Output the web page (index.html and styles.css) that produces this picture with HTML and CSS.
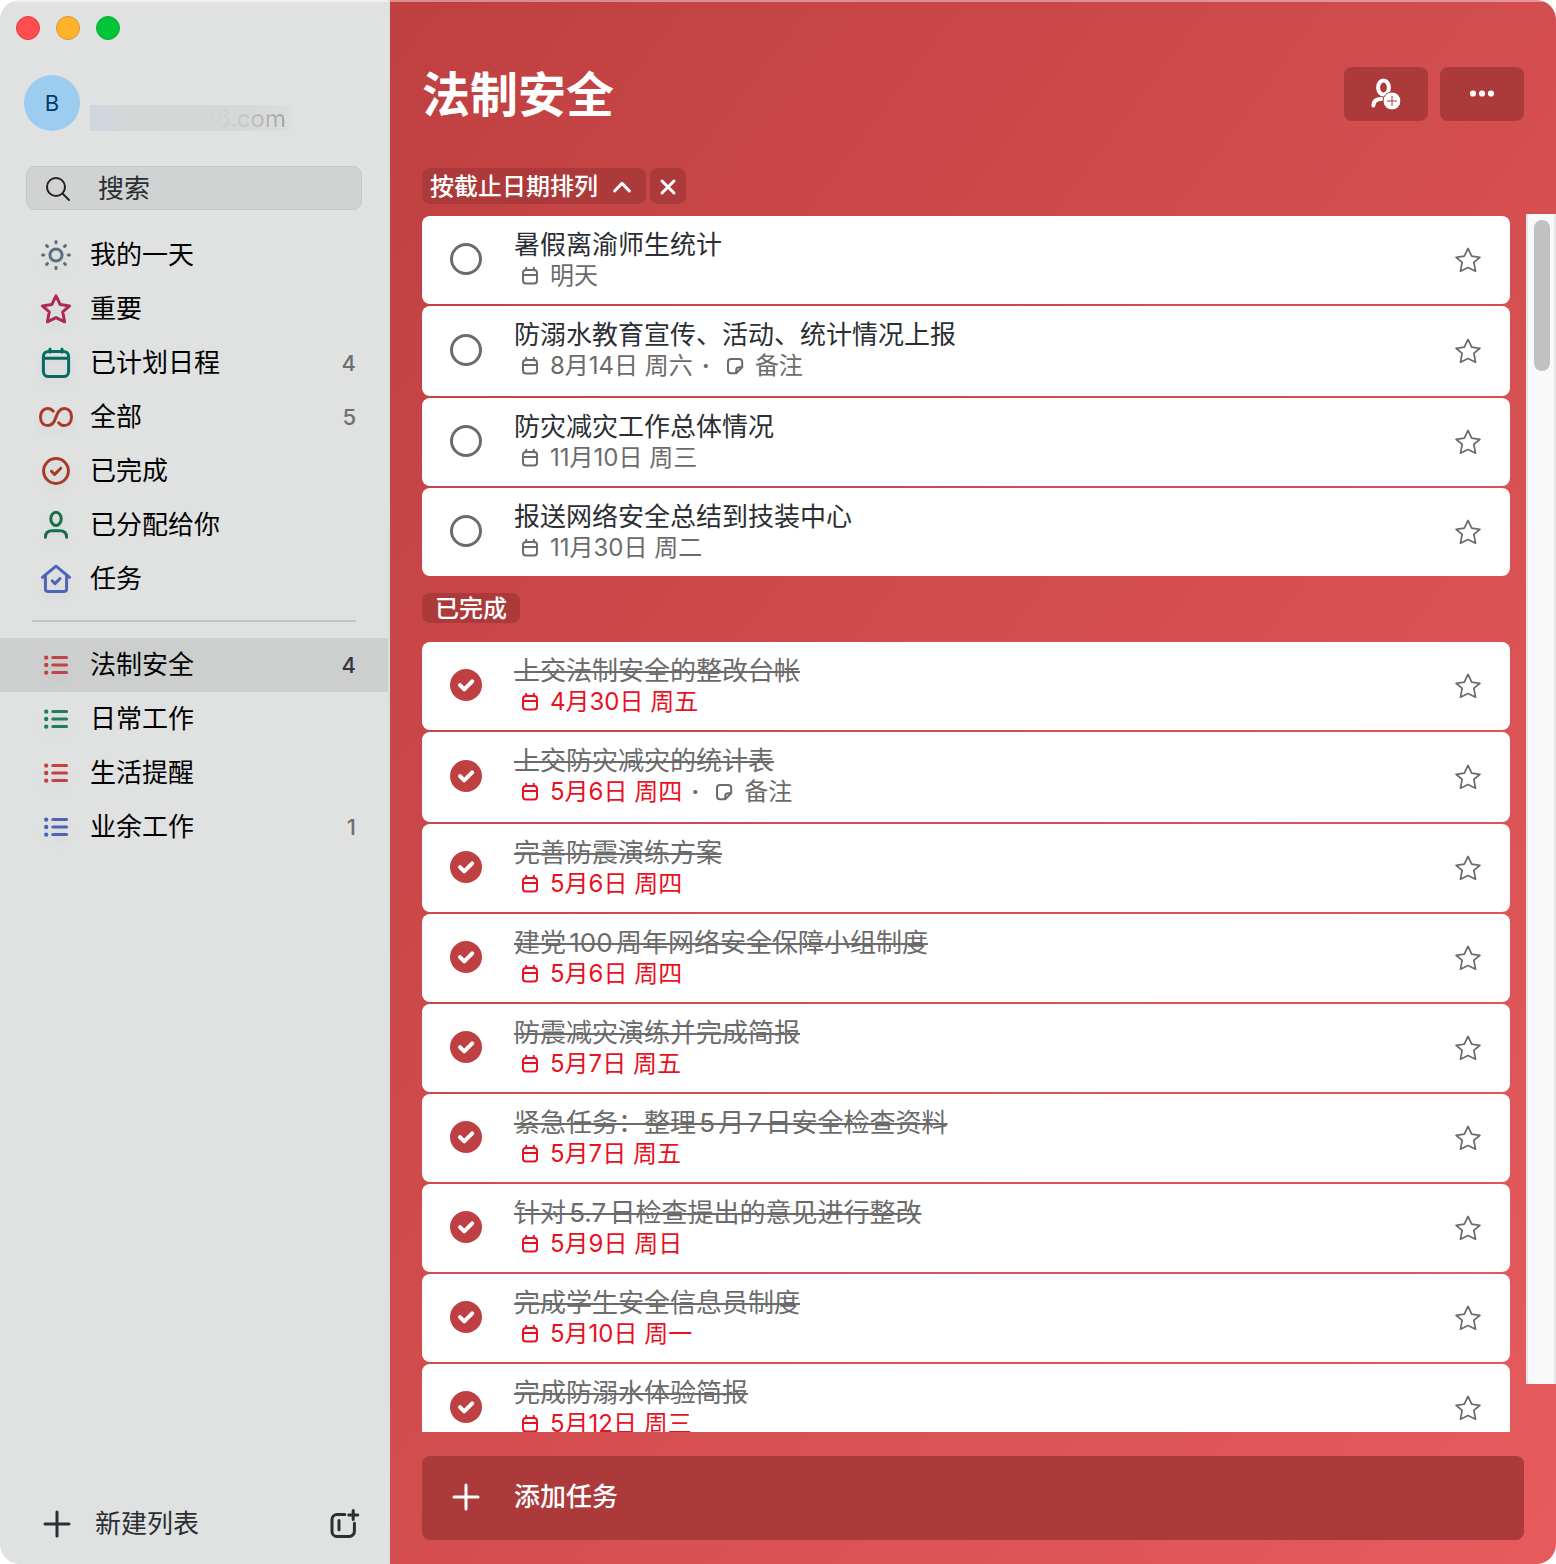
FILE: index.html
```html
<!DOCTYPE html>
<html lang="zh-CN">
<head>
<meta charset="utf-8">
<meta name="viewport" content="width=device-width, initial-scale=1">
<title>法制安全</title>
<link rel="stylesheet" href="styles.css">
</head>
<body>
<svg class="sprite" aria-hidden="true">
  <symbol id="i-search" viewBox="0 0 26 26"><circle cx="11" cy="11" r="9"/><path d="M17.6 17.6 24 24"/></symbol>
  <symbol id="i-sun" viewBox="0 0 32 32"><circle cx="16" cy="16" r="6.1"/><path d="M16 2.6v1.2M16 28.2v1.2M2.6 16h1.2M28.2 16h1.2M6.6 6.6l.9.9M24.5 24.5l.9.9M6.6 25.4l.9-.9M24.5 7.500l.9-.9"/></symbol>
  <symbol id="i-star" viewBox="0 0 32 32"><path d="M16 2.800 20.200 11.600 29.600 12.900 22.700 18.800 24.600 28.800 16 24.600 7.400 28.800 9.300 18.800 2.400 12.900 11.800 11.600Z"/></symbol>
  <symbol id="i-cal" viewBox="0 0 32 32"><rect x="3.400" y="4.400" width="25.200" height="25.200" rx="5"/><path d="M3.400 11.200h25.200M10 2v3M22 2v3"/></symbol>
  <symbol id="i-inf" viewBox="0 0 36 32"><path d="M15.200 10.200C13.800 8.400 12 7.400 9.700 7.400 5.400 7.400 2.500 11 2.500 16s2.900 8.600 7.200 8.600c4.500 0 6.800-3.600 8.300-8.600s3.800-8.600 8.300-8.600c4.300 0 7.200 3.600 7.200 8.600s-2.900 8.600-7.200 8.600c-2.300 0-4.100-1-5.500-2.800"/></symbol>
  <symbol id="i-done" viewBox="0 0 32 32"><circle cx="16" cy="16" r="12.400"/><path d="M11.400 16.200l3.200 3.200 6.200-6.200"/></symbol>
  <symbol id="i-user" viewBox="0 0 32 32"><ellipse cx="16" cy="9.800" rx="5.200" ry="6.600"/><path d="M5.400 28.200c0-4.400 2.600-6.400 7-6.400h7.200c4.400 0 7 2 7 6.400"/></symbol>
  <symbol id="i-home" viewBox="0 0 32 32"><path d="M2.400 14.400 16 3.200l13.600 11.200M5.400 12.400v13.400c0 1.800 1 2.800 2.800 2.800h15.600c1.800 0 2.800-1 2.800-2.800V12.400M12.200 17.800l2.800 2.800 5-5"/></symbol>
  <symbol id="i-list" viewBox="0 0 32 32"><path d="M12.800 8.600h13.800M12.800 16h13.800M12.800 23.600h13.800"/><path stroke-width="4.400" d="M6.200 8.600h.01M6.200 16h.01M6.200 23.600h.01"/></symbol>
  <symbol id="i-plus" viewBox="0 0 28 28"><path d="M14 2v24M2 14h24"/></symbol>
  <symbol id="i-group" viewBox="0 0 32 32"><path d="M16.800 6.600H9a5 5 0 0 0-5 5v11.800a5 5 0 0 0 5 5h12.400a5 5 0 0 0 5-5V15.200M11 12.400v9.400M25.200 2.600v9M20.800 7.100h9"/></symbol>
  <symbol id="i-date" viewBox="0 0 20 20"><rect x="3" y="4" width="14" height="13.500" rx="3"/><path d="M3 9h14M6.200 1.800v2.400M13.800 1.800v2.400"/></symbol>
  <symbol id="i-note" viewBox="0 0 20 20"><path d="M11.200 17.300H6a3 3 0 0 1-3-3V6a3 3 0 0 1 3-3h8.200a3 3 0 0 1 3 3v5.200l-6 6.100v-3.100a3 3 0 0 1 3-3h3"/></symbol>
  <symbol id="i-tick" viewBox="0 0 32 32"><path d="M10 16.200l4.200 4.200 8-8"/></symbol>
  <symbol id="i-up" viewBox="0 0 20 20"><path d="M2.600 14 10 6.400 17.400 14"/></symbol>
  <symbol id="i-close" viewBox="0 0 20 20"><path d="M4 4l12 12M16 4 4 16"/></symbol>
  <symbol id="i-share" viewBox="0 0 32 32"><ellipse cx="13.500" cy="9.500" rx="5.400" ry="7"/><path d="M3.400 27.600C3.400 23.400 6.200 21 11.400 21"/><circle class="badge" cx="22" cy="23" r="9"/><path class="cross" d="M22 18.400v9.200M17.400 23h9.200"/></symbol>
  <symbol id="i-more" viewBox="0 0 28 28"><circle cx="5" cy="13.500" r="3.100"/><circle cx="14" cy="13.500" r="3.100"/><circle cx="23" cy="13.500" r="3.100"/></symbol>
</svg>

<div class="window">
  <aside class="sidebar">
    <div class="lights">
      <button class="light light-close" aria-label="关闭"></button>
      <button class="light light-min" aria-label="最小化"></button>
      <button class="light light-max" aria-label="缩放"></button>
    </div>
    <div class="account">
      <span class="avatar">B</span>
      <span class="email"><span class="email-text">d6.com</span></span>
    </div>
    <label class="search">
      <svg class="icon-search"><use href="#i-search"/></svg>
      <input type="search" placeholder="搜索" aria-label="搜索">
    </label>
    <nav class="nav">
      <a class="item slate" href="#"><svg><use href="#i-sun"/></svg><span>我的一天</span></a>
      <a class="item pink" href="#"><svg><use href="#i-star"/></svg><span>重要</span></a>
      <a class="item teal" href="#"><svg><use href="#i-cal"/></svg><span>已计划日程</span><span class="count">4</span></a>
      <a class="item rust" href="#"><svg class="wide"><use href="#i-inf"/></svg><span>全部</span><span class="count">5</span></a>
      <a class="item rust" href="#"><svg><use href="#i-done"/></svg><span>已完成</span></a>
      <a class="item green" href="#"><svg><use href="#i-user"/></svg><span>已分配给你</span></a>
      <a class="item blue" href="#"><svg><use href="#i-home"/></svg><span>任务</span></a>
    </nav>
    <hr class="divider">
    <nav class="nav">
      <a class="item red selected" href="#" aria-current="page"><svg><use href="#i-list"/></svg><span>法制安全</span><span class="count">4</span></a>
      <a class="item leaf" href="#"><svg><use href="#i-list"/></svg><span>日常工作</span></a>
      <a class="item red" href="#"><svg><use href="#i-list"/></svg><span>生活提醒</span></a>
      <a class="item blue" href="#"><svg><use href="#i-list"/></svg><span>业余工作</span><span class="count">1</span></a>
    </nav>
    <div class="sidebar-foot">
      <button class="new-list"><svg><use href="#i-plus"/></svg><span>新建列表</span></button>
      <button class="new-group" aria-label="新建组"><svg><use href="#i-group"/></svg></button>
    </div>
  </aside>

  <main class="main">
    <header class="head">
      <h1>法制安全</h1>
      <div class="tools">
        <button class="tool" aria-label="共享"><svg class="icon-share"><use href="#i-share"/></svg></button>
        <button class="tool" aria-label="更多"><svg class="icon-more"><use href="#i-more"/></svg></button>
      </div>
    </header>
    <div class="sort">
      <button class="pill sort-by">按截止日期排列<svg><use href="#i-up"/></svg></button>
      <button class="pill sort-clear" aria-label="清除排序"><svg><use href="#i-close"/></svg></button>
    </div>
    <div class="content">
      <div class="scroller">
        <ul class="tasks">
          <li class="task"><label class="check"><input type="checkbox" aria-label="暑假离渝师生统计"></label><div class="body"><p class="title">暑假离渝师生统计</p><p class="meta"><span class="due"><svg><use href="#i-date"/></svg>明天</span></p></div><button class="fav" aria-label="标记为重要"><svg><use href="#i-star"/></svg></button></li>
          <li class="task"><label class="check"><input type="checkbox" aria-label="防溺水教育宣传、活动、统计情况上报"></label><div class="body"><p class="title">防溺水教育宣传、活动、统计情况上报</p><p class="meta has-note"><span class="due"><svg><use href="#i-date"/></svg>8月14日 周六</span><span class="dot">·</span><span class="note"><svg><use href="#i-note"/></svg>备注</span></p></div><button class="fav" aria-label="标记为重要"><svg><use href="#i-star"/></svg></button></li>
          <li class="task"><label class="check"><input type="checkbox" aria-label="防灾减灾工作总体情况"></label><div class="body"><p class="title">防灾减灾工作总体情况</p><p class="meta"><span class="due"><svg><use href="#i-date"/></svg>11月10日 周三</span></p></div><button class="fav" aria-label="标记为重要"><svg><use href="#i-star"/></svg></button></li>
          <li class="task"><label class="check"><input type="checkbox" aria-label="报送网络安全总结到技装中心"></label><div class="body"><p class="title">报送网络安全总结到技装中心</p><p class="meta"><span class="due"><svg><use href="#i-date"/></svg>11月30日 周二</span></p></div><button class="fav" aria-label="标记为重要"><svg><use href="#i-star"/></svg></button></li>
        </ul>
        <button class="pill done-toggle" aria-expanded="true">已完成</button>
        <ul class="tasks done">
          <li class="task"><label class="check"><input type="checkbox" checked aria-label="上交法制安全的整改台帐"><svg><use href="#i-tick"/></svg></label><div class="body"><p class="title">上交法制安全的整改台帐</p><p class="meta"><span class="due"><svg><use href="#i-date"/></svg>4月30日 周五</span></p></div><button class="fav" aria-label="标记为重要"><svg><use href="#i-star"/></svg></button></li>
          <li class="task"><label class="check"><input type="checkbox" checked aria-label="上交防灾减灾的统计表"><svg><use href="#i-tick"/></svg></label><div class="body"><p class="title">上交防灾减灾的统计表</p><p class="meta has-note"><span class="due"><svg><use href="#i-date"/></svg>5月6日 周四</span><span class="dot">·</span><span class="note"><svg><use href="#i-note"/></svg>备注</span></p></div><button class="fav" aria-label="标记为重要"><svg><use href="#i-star"/></svg></button></li>
          <li class="task"><label class="check"><input type="checkbox" checked aria-label="完善防震演练方案"><svg><use href="#i-tick"/></svg></label><div class="body"><p class="title">完善防震演练方案</p><p class="meta"><span class="due"><svg><use href="#i-date"/></svg>5月6日 周四</span></p></div><button class="fav" aria-label="标记为重要"><svg><use href="#i-star"/></svg></button></li>
          <li class="task"><label class="check"><input type="checkbox" checked aria-label="建党100周年网络安全保障小组制度"><svg><use href="#i-tick"/></svg></label><div class="body"><p class="title">建党100周年网络安全保障小组制度</p><p class="meta"><span class="due"><svg><use href="#i-date"/></svg>5月6日 周四</span></p></div><button class="fav" aria-label="标记为重要"><svg><use href="#i-star"/></svg></button></li>
          <li class="task"><label class="check"><input type="checkbox" checked aria-label="防震减灾演练并完成简报"><svg><use href="#i-tick"/></svg></label><div class="body"><p class="title">防震减灾演练并完成简报</p><p class="meta"><span class="due"><svg><use href="#i-date"/></svg>5月7日 周五</span></p></div><button class="fav" aria-label="标记为重要"><svg><use href="#i-star"/></svg></button></li>
          <li class="task"><label class="check"><input type="checkbox" checked aria-label="紧急任务：整理5月7日安全检查资料"><svg><use href="#i-tick"/></svg></label><div class="body"><p class="title">紧急任务：整理5月7日安全检查资料</p><p class="meta"><span class="due"><svg><use href="#i-date"/></svg>5月7日 周五</span></p></div><button class="fav" aria-label="标记为重要"><svg><use href="#i-star"/></svg></button></li>
          <li class="task"><label class="check"><input type="checkbox" checked aria-label="针对5.7日检查提出的意见进行整改"><svg><use href="#i-tick"/></svg></label><div class="body"><p class="title">针对5.7日检查提出的意见进行整改</p><p class="meta"><span class="due"><svg><use href="#i-date"/></svg>5月9日 周日</span></p></div><button class="fav" aria-label="标记为重要"><svg><use href="#i-star"/></svg></button></li>
          <li class="task"><label class="check"><input type="checkbox" checked aria-label="完成学生安全信息员制度"><svg><use href="#i-tick"/></svg></label><div class="body"><p class="title">完成学生安全信息员制度</p><p class="meta"><span class="due"><svg><use href="#i-date"/></svg>5月10日 周一</span></p></div><button class="fav" aria-label="标记为重要"><svg><use href="#i-star"/></svg></button></li>
          <li class="task"><label class="check"><input type="checkbox" checked aria-label="完成防溺水体验简报"><svg><use href="#i-tick"/></svg></label><div class="body"><p class="title">完成防溺水体验简报</p><p class="meta"><span class="due"><svg><use href="#i-date"/></svg>5月12日 周三</span></p></div><button class="fav" aria-label="标记为重要"><svg><use href="#i-star"/></svg></button></li>
        </ul>
      </div>
      <div class="track"><div class="thumb"></div></div>
    </div>
    <button class="add-task"><svg><use href="#i-plus"/></svg><span>添加任务</span></button>
  </main>
</div>
</body>
</html>
```
FILE: styles.css
```css
* { box-sizing: border-box; }

body {
  margin: 0;
  background: #fff;
  font-family: Inter, "Noto Sans CJK SC", sans-serif;
  font-size: 26px;
  line-height: 32px;
  color: #2b2e33;
}

button {
  margin: 0;
  padding: 0;
  border: 0;
  background: none;
  color: inherit;
  font: inherit;
}

a { color: inherit; text-decoration: none; }
p, h1, ul { margin: 0; padding: 0; }

svg {
  display: block;
  flex: none;
  fill: none;
  stroke: currentColor;
  stroke-width: 3;
  stroke-linecap: round;
  stroke-linejoin: round;
}

.sprite { display: none; }

.window {
  display: flex;
  height: 100vh;
  overflow: hidden;
  border-radius: 20px;
  background: #e0e2e1;
}

/* Sidebar */
.sidebar {
  display: flex;
  flex-direction: column;
  flex: none;
  width: 390px;
  border-right: 2px solid #dddfde;
  box-shadow: inset 0 2px rgba(255, 255, 255, .5);
}

.lights { display: flex; gap: 16px; padding: 16px 16px 0; }
.light { width: 24px; height: 24px; border-radius: 50%; border: 1px solid; }
.light-close { background: #ff4d50; border-color: #e23b40; }
.light-min { background: #ffb32c; border-color: #dd9526; }
.light-max { background: #00c537; border-color: #0aac30; }

.account { display: flex; align-items: center; gap: 10px; padding: 35px 24px 35px; }

.avatar {
  width: 56px;
  height: 56px;
  border-radius: 50%;
  background: #9ccdf1;
  color: #06396b;
  font-size: 22px;
  line-height: 56px;
  text-align: center;
}

.email {
  width: 203px;
  height: 26px;
  margin-top: 30px;
  padding-right: 7px;
  background: linear-gradient(90deg, #cfd6e0, #d4d6d6 20%, #d6d7d7 70%, #dbdddc 96%, #e0e2e1);
  line-height: 26px;
  text-align: right;
}

.email-text {
  background: linear-gradient(90deg, #d3d4d4 20%, #c6c7c7 50%, #a4a5a5);
  background-clip: text;
  color: transparent;
  font-size: 24px;
}

.search {
  display: flex;
  align-items: center;
  gap: 27px;
  height: 44px;
  margin: 0 26px 18px;
  padding: 2px 18px 0;
  border: 1px solid #c5c7c6;
  border-radius: 9px;
  background: #d1d3d2;
}

.icon-search { width: 26px; height: 26px; stroke-width: 2; color: #222; }

.search input {
  flex: 1;
  min-width: 0;
  padding: 0;
  border: 0;
  outline: 0;
  background: none;
  color: inherit;
  font: inherit;
  appearance: none;
}

.search input::placeholder { color: #2b2e33; opacity: 1; }

.item {
  display: flex;
  align-items: center;
  gap: 18px;
  height: 54px;
  padding: 0 32px 0 40px;
}

.item svg { width: 32px; height: 32px; filter: drop-shadow(0 6px 4px rgba(0, 0, 0, .04)); }
.item svg.wide { width: 36px; margin: 0 -2px; }
.item span { color: #000; }
.item .count { margin-left: auto; color: #6e6f70; font-size: 22px; font-weight: 500; }
.item.selected { background: #cdcfce; }
.item.selected .count { color: #34363e; }

.slate { color: #5c6d7c; }
.pink { color: #ac2a56; }
.teal { color: #076a63; }
.rust { color: #a83a27; }
.green { color: #156f4a; }
.blue { color: #4e63b8; }
.red { color: #c44144; }
.leaf { color: #1d8059; }

.divider { width: 324px; height: 2px; margin: 14px 32px 16px; border: 0; background: #c3c5c5; }

.sidebar-foot {
  display: flex;
  align-items: center;
  justify-content: space-between;
  margin-top: auto;
  padding: 0 28px 24px 43px;
}

.new-list { display: flex; align-items: center; gap: 24px; }
.new-list svg { width: 28px; height: 28px; }
.new-group svg { width: 32px; height: 32px; }

/* Main */
.main {
  display: flex;
  flex-direction: column;
  flex: 1;
  min-width: 0;
  padding: 0 0 24px 32px;
  background: linear-gradient(to bottom right, #bf4041, #e75b5d);
  box-shadow: inset 0 2px rgba(255, 255, 255, .4);
  color: #fff;
}

.head { display: flex; align-items: center; justify-content: space-between; padding: 64px 32px 0 0; }
.head h1 { padding-top: 2px; font-size: 48px; line-height: 58px; font-weight: 700; }
.tools { display: flex; gap: 12px; }
.tool { display: grid; place-items: center; width: 84px; height: 54px; border-radius: 8px; background: #ac3a3a; }
.icon-share { width: 32px; height: 32px; stroke-width: 4; }
.icon-share, .icon-more { color: #fff; }
.badge { fill: #fff; stroke: #ac3a3a; stroke-width: 1; }
.cross { stroke: #ac3a3a; stroke-width: 1; }
.icon-more { width: 28px; height: 28px; fill: #fff; stroke: none; }

.sort { display: flex; gap: 4px; padding: 44px 0 10px; }
.pill { display: flex; align-items: center; border-radius: 8px; background: #ac3a3a; color: #fff; font-size: 24px; font-weight: 500; }
.sort-by { gap: 14px; height: 36px; padding: 2px 14px 0 8px; }
.sort-clear { justify-content: center; width: 36px; height: 36px; padding-top: 2px; }
.pill svg { width: 20px; height: 20px; }

.content { display: flex; flex: 1; gap: 16px; min-height: 0; }
.scroller { flex: 1; min-width: 0; margin-top: 2px; overflow-y: auto; scrollbar-width: none; }

.track { flex: none; width: 30px; margin-bottom: 48px; padding: 6px 6px 0 8px; border: solid #e6e6e6; border-width: 0 2px; background: #f9f9f9; }
.thumb { width: 16px; height: 151px; margin-left: -2px; border-radius: 8px; background: #c1c1c1; }

.tasks { display: flex; flex-direction: column; gap: 2px; list-style: none; }

.task {
  display: flex;
  align-items: center;
  padding: 13px 26px 13px 28px;
  border-radius: 8px;
  background: #fff;
  color: #2b2e33;
}

.check { display: grid; flex: none; margin: 0 32px 2px 0; }
.check > * { grid-area: 1 / 1; width: 32px; height: 32px; }
.check input { margin: 0; appearance: none; border: 3px solid #6b6b6b; border-radius: 50%; }
.check input:checked { border: 0; background: #bf4043; }
.check svg { z-index: 1; color: #fff; stroke-width: 4; pointer-events: none; }

.body { flex: 1; min-width: 0; }
.title { text-autospace: normal; }
.done .title { color: #6b6b6b; text-decoration: line-through 2px; }

.meta { display: flex; padding-left: 6px; color: #6b6b6b; font-size: 24px; line-height: 30px; }
.meta.has-note { padding-bottom: 2px; }
.meta svg { width: 20px; height: 20px; stroke-width: 2; }
.due, .note { display: flex; align-items: center; gap: 10px; }
.done .due { color: #e81123; }
.dot { width: 26px; margin-right: 6px; font-weight: 700; text-align: center; }

.fav { padding: 0 2px; }
.fav svg { width: 28px; height: 28px; color: #6b6b6b; stroke-width: 2; }

.done-toggle { height: 30px; margin: 17px 0 19px; padding: 2px 13px 0; }

.add-task {
  display: flex;
  align-items: center;
  gap: 34px;
  height: 84px;
  margin: 24px 32px 0 0;
  padding: 0 30px 2px;
  border-radius: 8px;
  background: #ac3a3a;
  font-weight: 500;
}

.add-task svg { width: 28px; height: 28px; }
```
